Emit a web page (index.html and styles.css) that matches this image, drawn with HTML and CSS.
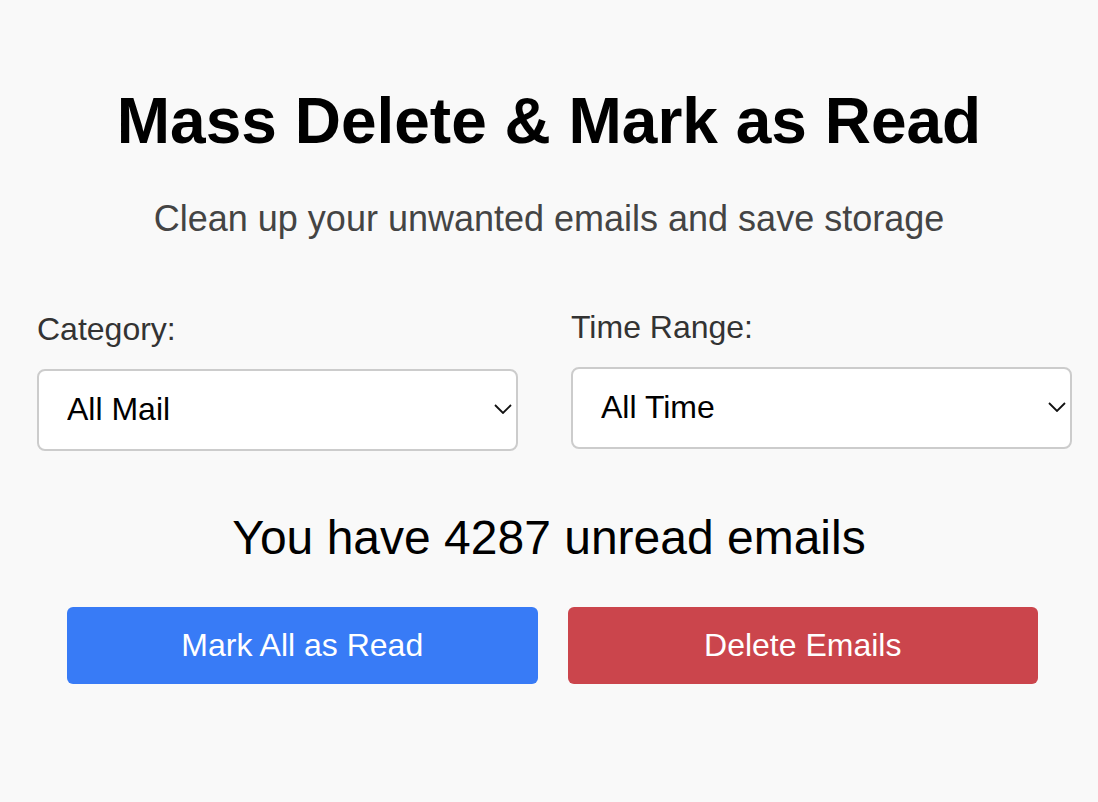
FILE: index.html
```html
<!DOCTYPE html>
<html lang="en">
<head>
<meta charset="utf-8">
<title>Mass Delete &amp; Mark as Read</title>
<link rel="stylesheet" href="styles.css">
</head>
<body>
  <main class="page">
    <h1 class="title">Mass Delete &amp; Mark as Read</h1>
    <p class="subtitle">Clean up your unwanted emails and save storage</p>

    <div class="filters">
      <div class="field field--low">
        <label class="field-label" for="category">Category:</label>
        <div class="select-wrap">
          <select id="category" class="select">
            <option>All Mail</option>
            <option>Primary</option>
            <option>Promotions</option>
            <option>Social</option>
            <option>Updates</option>
          </select>
          <svg class="chevron" viewBox="0 0 18 10" aria-hidden="true"><polyline points="1,1 9,9 17,1" /></svg>
        </div>
      </div>
      <div class="field">
        <label class="field-label" for="range">Time Range:</label>
        <div class="select-wrap">
          <select id="range" class="select">
            <option>All Time</option>
            <option>Older than 1 month</option>
            <option>Older than 6 months</option>
            <option>Older than 1 year</option>
          </select>
          <svg class="chevron" viewBox="0 0 18 10" aria-hidden="true"><polyline points="1,1 9,9 17,1" /></svg>
        </div>
      </div>
    </div>

    <p class="count">You have 4287 unread emails</p>

    <div class="actions">
      <button class="btn btn--blue" type="button">Mark All as Read</button>
      <button class="btn btn--red" type="button">Delete Emails</button>
    </div>
  </main>
</body>
</html>
```

FILE: styles.css
```css
* {
  box-sizing: border-box;
}

html, body {
  margin: 0;
  padding: 0;
  background: #f9f9f9;
}

body {
  font-family: "Liberation Sans", Arial, sans-serif;
  color: #000;
}

.page {
  display: flex;
  flex-direction: column;
  padding-top: 83px;
  min-height: 802px;
}

.title {
  margin: 0;
  font-size: 64px;
  line-height: 76px;
  font-weight: 700;
  text-align: center;
  color: #000;
}

.subtitle {
  margin: 38px 0 0;
  font-size: 36px;
  line-height: 44px;
  text-align: center;
  color: #444;
}

.filters {
  display: grid;
  grid-template-columns: 481px 1fr;
  column-gap: 53px;
  align-items: start;
  margin-top: 67px;
  padding: 0 26px 0 37px;
}

.field {
  display: flex;
  flex-direction: column;
}

.field--low {
  margin-top: 2px;
}

.field-label {
  font-size: 32px;
  line-height: 38px;
  color: #333;
}

.select-wrap {
  position: relative;
  margin-top: 21px;
}

.select {
  display: block;
  width: 100%;
  height: 82px;
  margin: 0;
  padding: 0 40px 3px 28px;
  border: 2px solid #cccccc;
  border-radius: 8px;
  background: #fff;
  font-family: "Liberation Sans", Arial, sans-serif;
  font-size: 32px;
  color: #000;
  appearance: none;
  -webkit-appearance: none;
  outline: none;
}

.chevron {
  position: absolute;
  right: 6px;
  top: 50%;
  width: 18px;
  height: 10px;
  margin-top: -6px;
  fill: none;
  stroke: #111;
  stroke-width: 1.8;
  pointer-events: none;
}

.count {
  margin: 59px 0 0;
  font-size: 48px;
  line-height: 56px;
  text-align: center;
  color: #000;
}

.actions {
  display: flex;
  gap: 30px;
  margin-top: 41px;
  padding: 0 60px 0 67px;
}

.btn {
  flex: 1;
  height: 77px;
  border: 0;
  border-radius: 6px;
  font-family: "Liberation Sans", Arial, sans-serif;
  font-size: 32px;
  color: #fff;
  cursor: pointer;
}

.btn--blue {
  background: #387bf6;
}

.btn--red {
  background: #cb454c;
}
```
